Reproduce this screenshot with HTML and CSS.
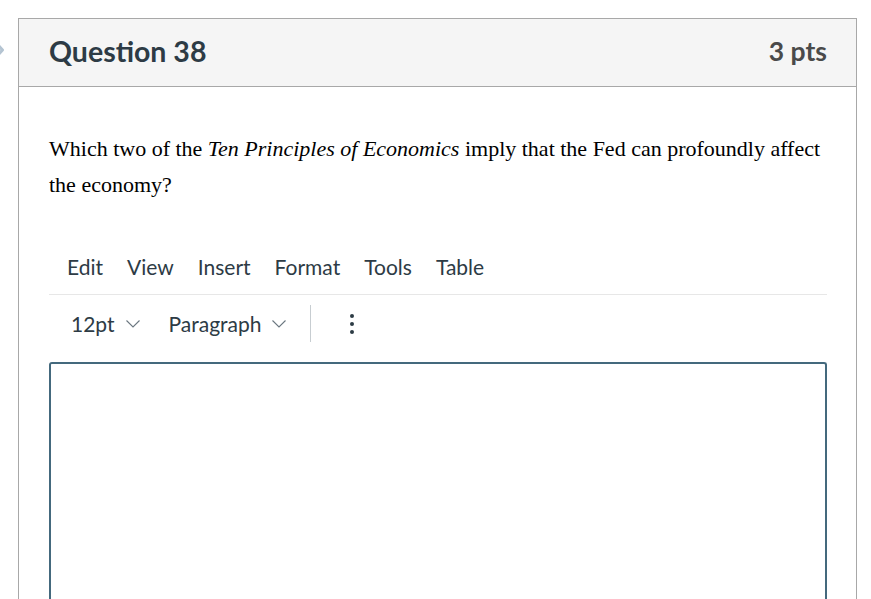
FILE: index.html
```html
<!DOCTYPE html>
<html lang="en">
<head>
<meta charset="utf-8">
<title>Question 38</title>
<link rel="stylesheet" href="styles.css">
</head>
<body>
<div class="page">
  <span class="edge-icon" aria-hidden="true">
    <svg width="10" height="20" viewBox="0 0 10 20"><path d="M-4 3 L2.5 10 L-4 17" fill="none" stroke="#b4c4d2" stroke-width="3" stroke-linecap="round" stroke-linejoin="round"/></svg>
  </span>
  <div class="card">
    <div class="card-header">
      <h2 class="title">Question 38</h2>
      <span class="pts">3 pts</span>
    </div>
    <div class="card-body">
      <p class="question">Which two of the <em>Ten Principles of Economics</em> imply that the Fed can profoundly affect the economy?</p>
      <div class="menubar">
        <span>Edit</span><span>View</span><span>Insert</span><span>Format</span><span>Tools</span><span>Table</span>
      </div>
      <div class="toolbar">
        <span class="drop">12pt <svg class="chev" width="14" height="8" viewBox="0 0 14 8"><path d="M0.5 0.5 L7 7 L13.5 0.5" fill="none" stroke="#6b7780" stroke-width="1.1"/></svg></span>
        <span class="drop para">Paragraph <svg class="chev" width="14" height="8" viewBox="0 0 14 8"><path d="M0.5 0.5 L7 7 L13.5 0.5" fill="none" stroke="#6b7780" stroke-width="1.1"/></svg></span>
        <span class="sep"></span>
        <span class="more"><i></i><i></i><i></i></span>
      </div>
      <div class="editor"></div>
    </div>
  </div>
</div>
</body>
</html>
```
FILE: styles.css
```css
html, body {
  margin: 0;
  padding: 0;
  background: #ffffff;
  overflow: hidden;
}
.page {
  position: relative;
  padding: 18px 14px 0 18px;
  height: 599px;
  box-sizing: border-box;
}
.edge-icon {
  position: absolute;
  left: 0;
  top: 40px;
  width: 10px;
  height: 20px;
}
.card {
  width: 839px;
  box-sizing: border-box;
  border: 1px solid #a8a8a8;
  border-bottom: none;
  height: 600px;
}
.card-header {
  display: flex;
  align-items: center;
  justify-content: space-between;
  background: #f5f5f5;
  border-bottom: 1px solid #a8a8a8;
  padding: 0 29px 4px 30px;
  box-sizing: border-box;
  height: 68px;
}
.title {
  margin: 0;
  font-family: Lato, "Open Sans", sans-serif;
  font-weight: 700;
  font-size: 28.5px;
  color: #2d3b45;
}
.pts {
  font-family: Lato, "Open Sans", sans-serif;
  font-weight: 700;
  font-size: 26.5px;
  color: #4a4a4a;
}
.card-body {
  padding: 0 29px 0 30px;
}
.question {
  margin: 44px 0 0 0;
  font-family: "Liberation Serif", "Times New Roman", serif;
  font-size: 22px;
  line-height: 36px;
  color: #000;
}
.question em {
  font-style: italic;
}
.menubar {
  margin-top: 35px;
  display: flex;
  gap: 24px;
  padding: 0 0 0 18px;
  height: 56px;
  align-items: center;
  border-bottom: 1px solid #e7e7e7;
  font-family: Lato, "Open Sans", sans-serif;
  font-size: 21px;
  color: #2d3b45;
}
.toolbar {
  display: flex;
  align-items: center;
  height: 57px;
  padding-left: 22px;
  font-family: Lato, "Open Sans", sans-serif;
  font-size: 21px;
  color: #2d3b45;
}
.drop {
  display: inline-flex;
  align-items: center;
  gap: 11px;
}
.chev {
  margin-top: 1px;
}
.para {
  margin-left: 29px;
}
.sep {
  width: 1px;
  height: 37px;
  background: #c7cdd1;
  margin-left: 24px;
}
.more {
  display: flex;
  flex-direction: column;
  gap: 4px;
  margin-left: 39px;
}
.more i {
  display: block;
  width: 4px;
  height: 4px;
  border-radius: 50%;
  background: #2d3b45;
}
.editor {
  margin-top: 10px;
  height: 300px;
  border: 2px solid #44697d;
  border-bottom: none;
  border-radius: 3px 3px 0 0;
}
```
